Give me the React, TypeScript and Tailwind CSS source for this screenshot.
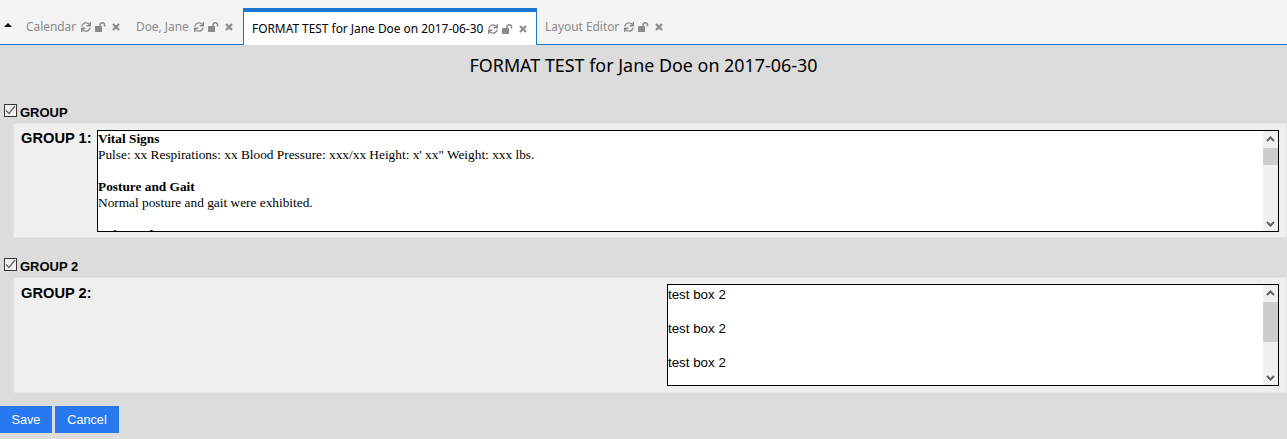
import { FaSync } from 'react-icons/fa';

const tabs = [
  { label: 'Calendar', width: 'w-[110px]' },
  { label: 'Doe, Jane', width: 'w-[115px]' },
];

function TabIcons() {
  return (
    <span className="ml-[5px] flex items-center text-[#8c8c8c]">
      <FaSync className="h-[10px] w-[10px]" />
      {/* open padlock, shackle swung out to the right */}
      <svg width="11" height="10" viewBox="0 0 11 10" className="ml-[4px]">
        <rect x="0" y="4" width="7" height="6" rx="0.5" fill="currentColor" />
        <path d="M5 4.5 V3 a2.2 2.2 0 0 1 4.6 0 V4.5" fill="none" stroke="currentColor" strokeWidth="1.5" />
      </svg>
      <svg width="8" height="8" viewBox="0 0 8 8" className="ml-[6px]">
        <path d="M1 1 L7 7 M7 1 L1 7" fill="none" stroke="currentColor" strokeWidth="2.2" />
      </svg>
    </span>
  );
}

function Tab({ label, width }: { label: string; width: string }) {
  return (
    <div className={`flex h-[36px] items-center border-b border-[#1976d2] pl-[8px] text-[#8a8a8a] ${width}`}>
      <span>{label}</span>
      <TabIcons />
    </div>
  );
}

function CheckBox() {
  return (
    <svg width="13" height="13" viewBox="0 0 13 13" className="shrink-0">
      <rect x="0.5" y="0.5" width="12" height="12" fill="#f0f0f0" stroke="#333333" />
      <path d="M2 6.5 L5 9.5 L11 2" fill="none" stroke="#666666" strokeWidth="1.3" />
    </svg>
  );
}

function Arrow({ up }: { up?: boolean }) {
  return (
    <div className="flex h-[15px] items-center justify-center">
      <svg width="9" height="6" viewBox="0 0 9 6">
        <path d={up ? 'M1 5 L4.5 1.5 L8 5' : 'M1 1 L4.5 4.5 L8 1'} fill="none" stroke="#606060" strokeWidth="2" />
      </svg>
    </div>
  );
}

function ScrollBar({ thumb }: { thumb: string }) {
  return (
    <div className="flex w-[15px] shrink-0 flex-col bg-[#f0f0f0]">
      <Arrow up />
      <div className="mt-[2px] flex-1">
        <div className={`bg-[#cdcdcd] ${thumb}`} />
      </div>
      <Arrow />
    </div>
  );
}

function GroupHeader({ label, className }: { label: string; className: string }) {
  return (
    <div className={`flex items-start gap-[3px] pl-[4px] ${className}`}>
      <CheckBox />
      <span className="pt-[1px] font-['Liberation_Sans',sans-serif] text-[13px] leading-[15px] font-bold text-black">{label}</span>
    </div>
  );
}

export default function App() {
  return (
    <div className="flex h-[439px] w-[1287px] flex-col overflow-hidden bg-[#dcdcdc] font-['Liberation_Sans',sans-serif]">
      {/* tab strip */}
      <div className="flex h-[45px] items-end bg-[#f3f3f3] font-['Noto_Sans',sans-serif] text-[11.9px]">
        <div className="flex h-[36px] w-[18px] items-center border-b border-[#1976d2] pb-[4px] pl-[4px]">
          <div className="h-0 w-0 border-x-[4px] border-b-[4px] border-x-transparent border-b-black" />
        </div>
        {tabs.map((t) => (
          <Tab key={t.label} label={t.label} width={t.width} />
        ))}
        <div className="flex h-[37px] w-[294px] items-center border-x border-t-[4px] border-[#1976d2] bg-white pl-[8px] text-black">
          <span>FORMAT TEST for Jane Doe on 2017-06-30</span>
          <TabIcons />
        </div>
        <Tab label="Layout Editor" width="w-[750px]" />
      </div>

      <h1 className="mt-[8px] h-[24px] text-center font-['Noto_Sans',sans-serif] text-[17.9px] leading-[24px] text-black">
        FORMAT TEST for Jane Doe on 2017-06-30
      </h1>

      <GroupHeader label="GROUP" className="mt-[27px] h-[14px]" />
      <div className="mt-[5px] ml-[13px] flex h-[115px] border border-[#e3e3e3] bg-[#efefef] pt-[6px] pr-[7px] pb-[5px]">
        <div className="w-[83px] shrink-0 pl-[7px] text-[14.67px] leading-[16px] font-bold text-black">GROUP 1:</div>
        <div className="flex min-w-0 flex-1 border border-black bg-white">
          <div className="flex-1 overflow-hidden font-['Liberation_Serif',serif] text-[13.33px] leading-[16px] text-black">
            <b>Vital Signs</b>
            <br />
            Pulse: xx Respirations: xx Blood Pressure: xxx/xx Height: x' xx" Weight: xxx lbs.
            <br />
            <br />
            <b>Posture and Gait</b>
            <br />
            Normal posture and gait were exhibited.
            <br />
            <br />
            <b>Voice and Tone</b>
          </div>
          <ScrollBar thumb="h-[17px]" />
        </div>
      </div>

      <GroupHeader label="GROUP 2" className="mt-[20px] h-[14px]" />
      <div className="mt-[5px] ml-[13px] flex h-[116px] border border-[#e3e3e3] bg-[#efefef] pt-[6px] pr-[7px] pb-[6px]">
        <div className="w-[653px] shrink-0 pt-[1px] pl-[7px] text-[14.67px] leading-[16px] font-bold text-black">GROUP 2:</div>
        <div className="flex min-w-0 flex-1 border border-black bg-white">
          <div className="flex-1 overflow-hidden pt-[1px] text-[13.33px] leading-[17px] text-black">
            test box 2
            <br />
            <br />
            test box 2
            <br />
            <br />
            test box 2
          </div>
          <ScrollBar thumb="h-[40px]" />
        </div>
      </div>

      <div className="mt-[13px] flex gap-[3px] text-[12.67px] text-white">
        <button className="h-[27px] w-[52px] bg-[#2878f0] pt-[1px]">Save</button>
        <button className="h-[27px] w-[64px] bg-[#2878f0] pt-[1px]">Cancel</button>
      </div>
    </div>
  );
}
